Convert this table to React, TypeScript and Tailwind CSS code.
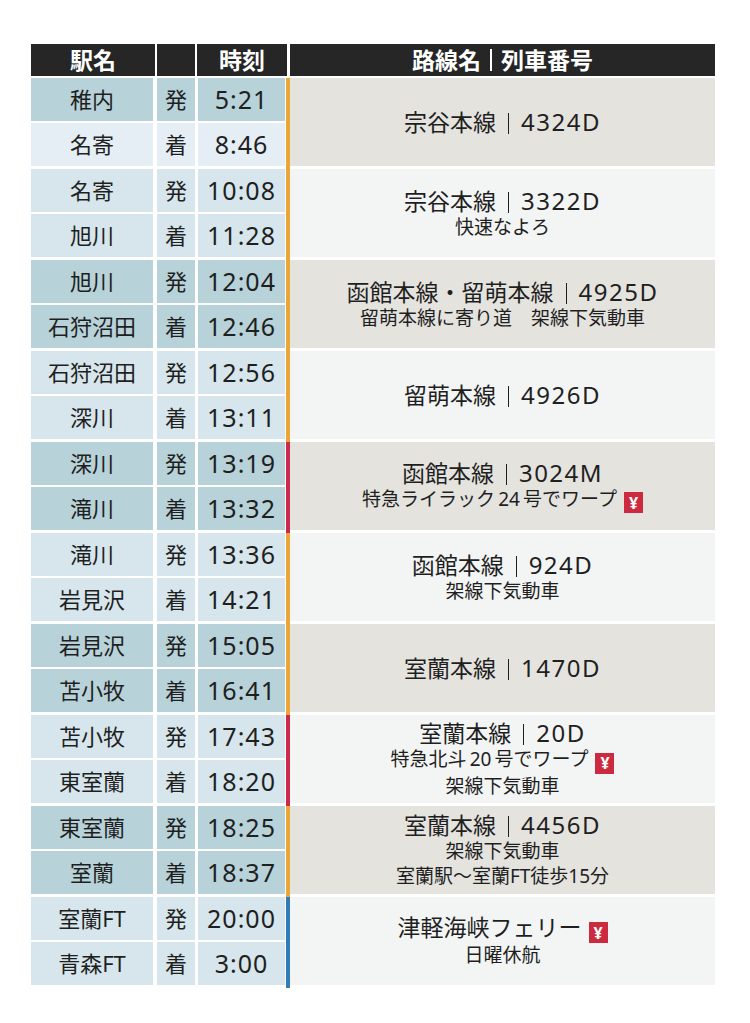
import React from 'react';

type Line = { text: string; yen?: boolean; main?: boolean };

interface Group {
    rows: [string, string, string][];
    lines: Line[];
    bar: string;
    left: string;
    right: string;
    lightSecond?: boolean;
}

const DARK = 'bg-[#b7d2d9]';
const LIGHT = 'bg-[#d6e6ec]';
const GRAY = 'bg-[#e4e3de]';
const WHITE = 'bg-[#f3f4f4]';
const ORANGE = 'bg-[#eaa638]';
const RED = 'bg-[#cc2a4c]';
const BLUE = 'bg-[#2f7db8]';

const groups: Group[] = [
    {
        rows: [['稚内', '発', '5:21'], ['名寄', '着', '8:46']],
        lines: [{ text: '宗谷本線｜4324D', main: true }],
        bar: ORANGE, left: DARK, right: GRAY, lightSecond: true,
    },
    {
        rows: [['名寄', '発', '10:08'], ['旭川', '着', '11:28']],
        lines: [{ text: '宗谷本線｜3322D', main: true }, { text: '快速なよろ' }],
        bar: ORANGE, left: LIGHT, right: WHITE,
    },
    {
        rows: [['旭川', '発', '12:04'], ['石狩沼田', '着', '12:46']],
        lines: [{ text: '函館本線・留萌本線｜4925D', main: true }, { text: '留萌本線に寄り道　架線下気動車' }],
        bar: ORANGE, left: DARK, right: GRAY,
    },
    {
        rows: [['石狩沼田', '発', '12:56'], ['深川', '着', '13:11']],
        lines: [{ text: '留萌本線｜4926D', main: true }],
        bar: ORANGE, left: LIGHT, right: WHITE,
    },
    {
        rows: [['深川', '発', '13:19'], ['滝川', '着', '13:32']],
        lines: [{ text: '函館本線｜3024M', main: true }, { text: '特急ライラック\u200924\u2009号でワープ', yen: true }],
        bar: RED, left: DARK, right: GRAY,
    },
    {
        rows: [['滝川', '発', '13:36'], ['岩見沢', '着', '14:21']],
        lines: [{ text: '函館本線｜924D', main: true }, { text: '架線下気動車' }],
        bar: ORANGE, left: LIGHT, right: WHITE,
    },
    {
        rows: [['岩見沢', '発', '15:05'], ['苫小牧', '着', '16:41']],
        lines: [{ text: '室蘭本線｜1470D', main: true }],
        bar: ORANGE, left: DARK, right: GRAY,
    },
    {
        rows: [['苫小牧', '発', '17:43'], ['東室蘭', '着', '18:20']],
        lines: [
            { text: '室蘭本線｜20D', main: true },
            { text: '特急北斗\u200920\u2009号でワープ', yen: true },
            { text: '架線下気動車' },
        ],
        bar: RED, left: LIGHT, right: WHITE,
    },
    {
        rows: [['東室蘭', '発', '18:25'], ['室蘭', '着', '18:37']],
        lines: [
            { text: '室蘭本線｜4456D', main: true },
            { text: '架線下気動車' },
            { text: '室蘭駅～室蘭FT徒歩15分' },
        ],
        bar: ORANGE, left: DARK, right: GRAY,
    },
    {
        rows: [['室蘭FT', '発', '20:00'], ['青森FT', '着', '3:00']],
        lines: [{ text: '津軽海峡フェリー', main: true, yen: true }, { text: '日曜休航' }],
        bar: BLUE, left: LIGHT, right: WHITE,
    },
];

const Yen = () => (
    <span className="inline-flex shrink-0 items-center justify-center w-[19px] h-[21px] ml-[7px] bg-[#cc2b3f] text-white text-[16px] font-bold leading-none align-[-3px]">
        ¥
    </span>
);

const RouteLine = ({ line }: { line: Line }) => {
    const [name, num] = line.text.split('｜');
    return (
        <div className={line.main ? 'text-[23px] leading-[27px]' : 'text-[19px] leading-[25px]'}>
            {name}
            {num !== undefined && (
                <>
                    <span className="inline-block w-px h-[21px] mx-[12px] bg-[#1f1f1f] align-[-3px]" />
                    <span className="text-[24px] tracking-[1.5px]">{num}</span>
                </>
            )}
            {line.yen && <Yen />}
        </div>
    );
};

const App = () => {
    return (
        <div className="min-h-[1023px] bg-white pt-[44px] pl-[31px] font-['Noto_Sans','Noto_Sans_CJK_JP',sans-serif] text-[#1f1f1f]">
            <div className="w-[684px]">
                {/* Header */}
                <div className="flex gap-[2px] h-[32px] text-white text-[23px] font-bold leading-[32px] mb-[2px]">
                    <div className="w-[124px] bg-[#262626] text-center">駅名</div>
                    <div className="w-[38px] bg-[#262626]" />
                    <div className="w-[90px] bg-[#262626] text-center">時刻</div>
                    <div className="flex-1 bg-[#262626] ml-[1px] flex items-center justify-center">
                        路線名
                        <span className="inline-block w-[2px] h-[22px] mx-[9px] bg-white" />
                        列車番号
                    </div>
                </div>

                {groups.map((g, gi) => (
                    <div key={gi} className="flex">
                        {/* Stations & times */}
                        <div className="flex flex-col gap-[2px] pb-[3px]">
                            {g.rows.map((r, ri) => {
                                const bg = g.lightSecond && ri === 1 ? 'bg-[#e4eef4]' : g.left;
                                return (
                                    <div key={ri} className="flex h-[43px] items-center">
                                        <div className={`w-[122px] h-full ${bg} flex items-center justify-center text-[22px]`}>
                                            {r[0]}
                                        </div>
                                        <div className={`w-[38px] h-full ml-[4px] ${bg} flex items-center justify-center text-[22px]`}>
                                            {r[1]}
                                        </div>
                                        <div className={`w-[87px] h-full ml-[3px] ${bg} flex items-center justify-center text-[25px] tracking-[1px]`}>
                                            {r[2]}
                                        </div>
                                    </div>
                                );
                            })}
                        </div>

                        {/* Color bar */}
                        <div className={`w-[4px] ml-[1px] ${g.bar}`} />

                        {/* Route */}
                        <div className={`flex-1 mb-[3px] ${g.right} flex flex-col items-center justify-center text-center`}>
                            {g.lines.map((l, li) => (
                                <RouteLine key={li} line={l} />
                            ))}
                        </div>
                    </div>
                ))}
            </div>
        </div>
    );
};

export default App;
